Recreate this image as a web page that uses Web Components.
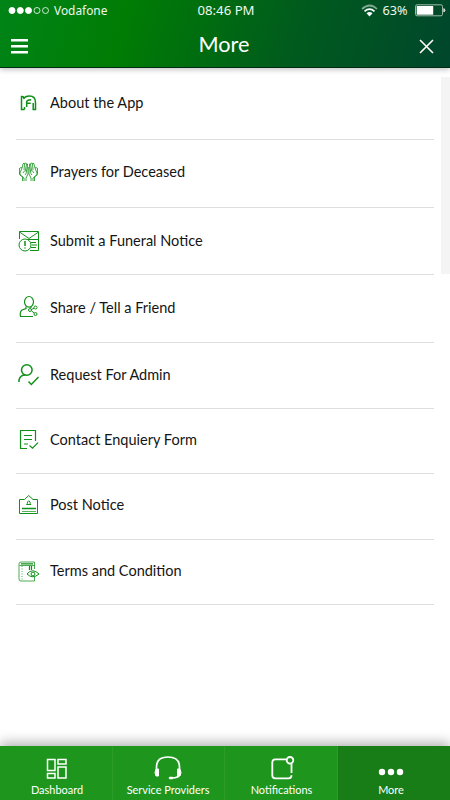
<!DOCTYPE html>
<html lang="en"><head><meta charset="utf-8"><title>More</title>
<style>html,body{margin:0;height:100%;background:#fff}body{overflow:hidden;font-family:Lato,Carlito,"Open Sans",sans-serif}</style></head>
<body><more-screen></more-screen>
<script>
const define=(name,html)=>customElements.define(name,class extends HTMLElement{
 constructor(){super();const t=document.createElement('template');t.innerHTML=html;this.attachShadow({mode:'open'}).append(t.content.cloneNode(true));}
});
const icons={
 about:'<g stroke-width="1.500"><path d="M6.500 17.500H3.500V4.500Q6 4 6 7M6.500 17.500V15M5.500 7Q7 4 11.500 4q6 0 6 6.500v7h-2.300V11"/><path d="M8.700 15V10q0-2.300 4.500-2.300M8.700 11.300h4"/></g>',
 hands:'<g stroke-width="1"><path stroke-opacity=".8" d="M4 8L2 13v2l4 3v3M1.500 8v6l3 3v4M2 8q1-1 2 0l1-4q1-2 1.500 0L6 10M6.500 4q1-2.500 2 0L7.500 10M8.500 4q1.500-1 1 2L8.500 11M5 13q2-4 3.500-2 0 3-1.500 4M10 7v7l-2 4v3"/><path stroke-opacity=".8" d="M17 8l2 5v2l-4 3v3M19.500 8v6l-3 3v4M19 8q-1-1-2 0l-1-4q-1-2-1.500 0l.5 6M14.500 4q-1-2.500-2 0l1 6M12.500 4q-1.500-1-1 2l1 5M16 13q-2-4-3.500-2 0 3 1.500 4M11 7v7l2 4v3"/></g>',
 mail:'<g stroke-width="1"><path d="M1.500 9V1.500h19v19H12M1.500 2l9.500 6.500L20.500 2M9.500 9.500h11M13 12.500h5M14 15h5M13 17.500h5"/><circle cx="7" cy="15" r="6"/><path stroke-width="1.500" d="M7 11v5M7 17.500v1"/></g>',
 share:'<g stroke-width="1.200"><ellipse cx="11" cy="4.800" rx="4.500" ry="5.300"/><path d="M8 9.500v2L4 13q-2.500 2-1.500 6.500H15M13 9.500v1.500"/><g stroke-width="1"><circle cx="12" cy="13" r="1.500"/><circle cx="17.500" cy="10.500" r="1.500"/><circle cx="17.500" cy="17" r="1.500"/><path d="M13.500 12.500l2.500-1.300M13.500 13.800l2.500 2.200"/></g></g>',
 admin:'<g stroke-width="1.500"><circle cx="8.800" cy="7" r="5.300"/><path d="M1 19v-2q1-5 6.500-5M10.500 18.500l2.800 3 7.200-7.500"/></g>',
 form:'<g stroke-width="1.200"><path d="M9 19.500H2.500v-18h15V12M6 6.500h8M6 10.500h8M6 15h4" /><path d="M11.500 16.500l3 2.700 5.500-5.500"/></g>',
 post:'<g stroke-width="1"><path d="M1.500 5.500h5L10.700 1.500 15 5.500h4.500v14h-18zM8.500 10.500q1-.500 1-2.500 1.200-2.500 2.500 0 0 2 1 2.500z"/><path stroke-width="1.500" d="M4 14.500h14"/><path stroke-opacity=".7" d="M4 17.500h14"/></g>',
 terms:'<g stroke-width="1"><path stroke-opacity=".75" d="M16.500 9V2H3q-2 0-2 2v15q0 2 2 2h13.500v-4M1.500 5.500h15"/><path stroke-width="1.200" d="M3 3.800h12M11.500 6v4M13.500 6v4"/><path d="M9 14q5.500-6.500 12 0-6.500 5.500-12 0z"/><circle cx="15" cy="14" r="1.900"/></g><path stroke-dasharray="1 1.500" stroke-opacity=".5" stroke-width="1.500" d="M4 6v15"/>'
};
define('status-bar',`<style>:host{display:flex;height:21px;align-items:center;font:12px/21px "Noto Sans",sans-serif;color:#eef7ee;box-sizing:border-box}
.left{display:flex;align-items:center;width:197.500px}.left svg{margin:0 5px 0 8px}.left span{font-size:11.900px}.time{font-size:13.200px;width:163.500px}.right{display:flex;align-items:center}.right span{margin:0 6px 0 4.500px;width:26px;font-size:12.700px}</style>
<div class="left"><svg width="41" height="9"><g fill="#fff" stroke="#fff"><circle cx="4" cy="4.500" r="3"/><circle cx="12.300" cy="4.500" r="3"/><circle cx="20.500" cy="4.500" r="3"/></g><g fill="none" stroke="#fff" stroke-width=".8"><circle cx="29" cy="4.500" r="3"/><circle cx="37.500" cy="4.500" r="3"/></g></svg><span>Vodafone</span></div><span class="time">08:46 PM</span><div class="right"><svg width="17" height="13" fill="none" stroke="#fff" stroke-width="1.700"><path opacity=".5" d="M1 5q8-7 15 0"/><path d="M3.500 7.300q5-4.300 10 0"/><path fill="#fff" stroke="none" d="M5.500 9.200q3-2.200 6 0l-3 3.300z"/></svg><span>63%</span><svg width="31" height="13"><rect x=".5" y=".8" width="27" height="11" rx="1.500" fill="none" stroke="#9db9a7"/><rect x="1.700" y="2" width="16.500" height="8.700" fill="#fff"/><path fill="#ddd" d="M28.300 4.300q2 0 2 2t-2 2z"/></svg></div>`);
define('app-header',`<style>:host{display:block;height:68px;background:linear-gradient(106deg,#008417 0%,#007c04 28%,#005a1e 66%,#00462c 100%);box-shadow:0 2px 5px rgba(0,0,0,.22);border-bottom:1px solid #002d13;box-sizing:border-box;position:relative}
nav{display:flex;height:47px;align-items:center;justify-content:space-between;padding:3px 15px 0 11px;box-sizing:border-box;color:#fff}h1{font-size:21.700px;font-weight:400;margin:0 0 4px;line-height:28px;padding-left:2px}svg{display:block}</style>
<status-bar></status-bar><nav><svg width="17" height="15" fill="#fff"><path d="M0 0h17v2.500H0zM0 6h17v2.500H0zM0 12h17v2.500H0z"/></svg><h1>More</h1><svg width="17" height="17" stroke="#fff" stroke-width="1.600"><path d="M2 2l13 13M15 2L2 15"/></svg></nav>`);
customElements.define('menu-row',class extends HTMLElement{constructor(){super();this.attachShadow({mode:'open'}).innerHTML=`<style>:host{display:flex;box-sizing:border-box;height:var(--h);padding-top:calc(var(--c) - 11px);border-bottom:1px solid #dedede;align-items:flex-start;color:#151515;font-size:14.530px;line-height:22px}svg{flex:none;margin:0 10px 0 2px;overflow:visible}span{white-space:nowrap;margin-top:var(--drop,0)}</style><svg width="22" height="22" fill="none" stroke="#109018">${icons[this.getAttribute('icon')]}</svg><span><slot></slot></span>`}});
const tabIcons={
 dashboard:'<path d="M3.500 3.500h7.500v11H3.500zM3.500 17.500h7.500v4.500H3.500zM14 3.500h8v4.500h-8zM14 11h8v11h-8z" stroke-width="1.500"/>',
 service:'<path d="M1.500 13v-2Q1.500 1 13 1q11.500 0 11.500 10v2M24.500 18q0 4-8 4" stroke-width="1.700"/><path d="M1 13h2.500v7H1Q-1 17 1 13zM25 13h-2.500v7H25q2-3 0-7z" fill="#fff" stroke-width="1"/><rect x="14" y="21" width="4" height="2" rx="1" fill="#fff" stroke-width=".5"/>',
 notifications:'<path d="M17 3.300H6.300q-3 0-3 3v13q0 3 3 3h13.200q3 0 3-3M22.500 8v9" stroke-width="1.800"/><circle cx="21" cy="4.300" r="3.300" stroke-width="1.800"/>',
 more:'<g fill="#fff" stroke="none"><circle cx="4" cy="16" r="3.200"/><circle cx="13" cy="16" r="3.200"/><circle cx="22" cy="16" r="3.200"/></g>'
};
customElements.define('tab-item',class extends HTMLElement{constructor(){super();this.attachShadow({mode:'open'}).innerHTML=`<style>:host{display:flex;flex-direction:column;align-items:center;padding-top:10px;box-sizing:border-box;background:var(--bg,#1e961e);color:#fff;border-right:var(--line,1px solid #2c9d27)}svg{overflow:visible}span{font-size:10.950px;line-height:15px;margin-top:1px;white-space:nowrap}</style><svg width="26" height="25" fill="none" stroke="#fff">${tabIcons[this.getAttribute('icon')]}</svg><span><slot></slot></span>`}});
define('tab-bar',`<style>:host{display:grid;grid-template-columns:113px 112px 113px 112px;height:54px;box-shadow:0 -3px 12px rgba(0,0,0,.32);position:relative}tab-item:first-of-type{padding-left:2px}tab-item:nth-of-type(2){padding-right:1px}tab-item:nth-of-type(3){padding-left:1px}tab-item:last-child{--bg:#187d17;--line:0;padding-right:6px}</style><tab-item icon="dashboard">Dashboard</tab-item><tab-item icon="service">Service Providers</tab-item><tab-item icon="notifications">Notifications</tab-item><tab-item icon="more">More</tab-item>`);
define('more-screen',`<style>:host{display:flex;flex-direction:column;height:800px;width:450px;overflow:hidden}main{flex:1;display:flex}section{width:418px;margin-left:16px}.thumb{width:9px;height:197px;background:#f4f4f4;margin:9px 0 0 auto}</style><app-header></app-header><main><section>
<menu-row icon="about" style="--h:72px;--c:35px">About the App</menu-row>
<menu-row icon="hands" style="--h:68px;--c:31px;--drop:1px">Prayers for Deceased</menu-row>
<menu-row icon="mail" style="--h:67px;--c:33px">Submit a Funeral Notice</menu-row>
<menu-row icon="share" style="--h:68px;--c:33px">Share / Tell a Friend</menu-row>
<menu-row icon="admin" style="--h:66px;--c:31px;--drop:1px">Request For Admin</menu-row>
<menu-row icon="form" style="--h:65px;--c:31px">Contact Enquiery Form</menu-row>
<menu-row icon="post" style="--h:66px;--c:31px">Post Notice</menu-row>
<menu-row icon="terms" style="--h:65px;--c:31px">Terms and Condition</menu-row></section><div class="thumb"></div></main><tab-bar></tab-bar>`);
</script></body></html>
